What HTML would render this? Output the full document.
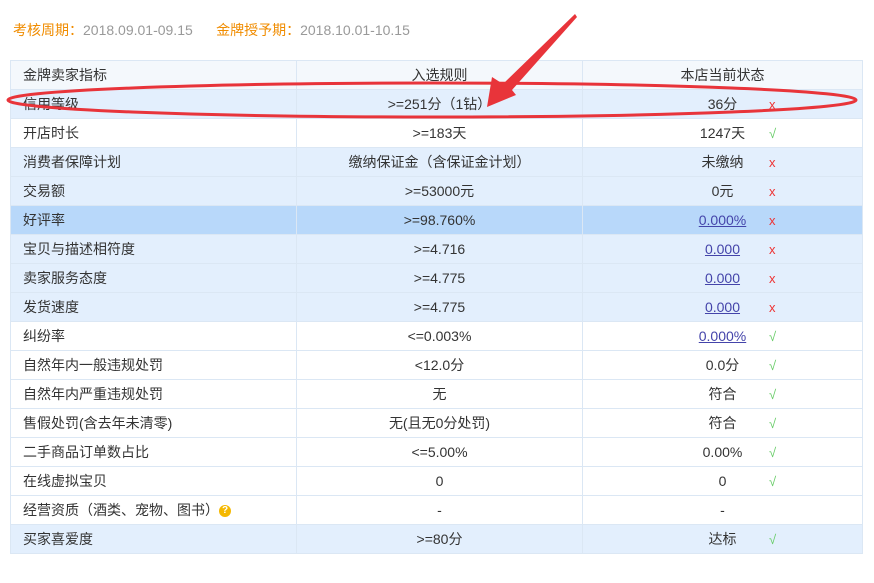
<!DOCTYPE html>
<html><head><meta charset="utf-8"><style>
body{margin:0;background:#fff;width:874px;height:583px;overflow:hidden;position:relative;font-family:"Liberation Sans","Noto Sans CJK SC",sans-serif;font-size:14px;color:#333}
.top{position:absolute;left:13px;top:20px;font-size:14px;color:#999}
.top b{font-weight:normal;color:#f08c00}
table{position:absolute;left:10px;top:60px;width:852px;border-collapse:collapse;table-layout:fixed}
td{height:28px;border:1px solid #dbe7f4;padding:0;text-align:center;line-height:28px;white-space:nowrap}
td:first-child{text-align:left;padding-left:12px}
tr{background:#fff}
tr.b{background:#e3effd}
tr.h{background:#f4f8fc}
tr.s{background:#b8d8fa}
.m{position:absolute;left:769px;font-size:13px}
.x{color:#e33}
.ok{color:#6c6}
u{color:#44a}
.q{display:inline-block;width:12px;height:12px;border-radius:6px;background:#f5b800;color:#fff;font-size:10px;line-height:12px;text-align:center;vertical-align:middle;font-weight:bold}
svg{position:absolute;left:0;top:0}
</style></head><body>
<div class="top"><b>考核周期：</b>2018.09.01-09.15 &nbsp;&nbsp;&nbsp;&nbsp; <b>金牌授予期：</b>2018.10.01-10.15</div>
<table>
<colgroup><col style="width:286px"><col style="width:286px"><col style="width:280px"></colgroup>
<tr class="h"><td>金牌卖家指标</td><td>入选规则</td><td>本店当前状态</td></tr>
<tr class="b"><td>信用等级</td><td>&gt;=251分（1钻）</td><td>36分</td></tr>
<tr><td>开店时长</td><td>&gt;=183天</td><td>1247天</td></tr>
<tr class="b"><td>消费者保障计划</td><td>缴纳保证金（含保证金计划）</td><td>未缴纳</td></tr>
<tr class="b"><td>交易额</td><td>&gt;=53000元</td><td>0元</td></tr>
<tr class="s"><td>好评率</td><td>&gt;=98.760%</td><td><u>0.000%</u></td></tr>
<tr class="b"><td>宝贝与描述相符度</td><td>&gt;=4.716</td><td><u>0.000</u></td></tr>
<tr class="b"><td>卖家服务态度</td><td>&gt;=4.775</td><td><u>0.000</u></td></tr>
<tr class="b"><td>发货速度</td><td>&gt;=4.775</td><td><u>0.000</u></td></tr>
<tr><td>纠纷率</td><td>&lt;=0.003%</td><td><u>0.000%</u></td></tr>
<tr><td>自然年内一般违规处罚</td><td>&lt;12.0分</td><td>0.0分</td></tr>
<tr><td>自然年内严重违规处罚</td><td>无</td><td>符合</td></tr>
<tr><td>售假处罚(含去年未清零)</td><td>无(且无0分处罚)</td><td>符合</td></tr>
<tr><td>二手商品订单数占比</td><td>&lt;=5.00%</td><td>0.00%</td></tr>
<tr><td>在线虚拟宝贝</td><td>0</td><td>0</td></tr>
<tr><td>经营资质（酒类、宠物、图书）<span class="q">?</span></td><td>-</td><td>-</td></tr>
<tr class="b"><td>买家喜爱度</td><td>&gt;=80分</td><td>达标</td></tr>
</table>
<div style="position:absolute;left:0;top:2px;font-size:13px">
<span class="m x" style="top:95px">x</span>
<span class="m ok" style="top:124px">√</span>
<span class="m x" style="top:153px">x</span>
<span class="m x" style="top:182px">x</span>
<span class="m x" style="top:211px">x</span>
<span class="m x" style="top:240px">x</span>
<span class="m x" style="top:269px">x</span>
<span class="m x" style="top:298px">x</span>
<span class="m ok" style="top:327px">√</span>
<span class="m ok" style="top:356px">√</span>
<span class="m ok" style="top:385px">√</span>
<span class="m ok" style="top:414px">√</span>
<span class="m ok" style="top:443px">√</span>
<span class="m ok" style="top:472px">√</span>
<span class="m ok" style="top:530px">√</span>
</div>
<svg width="874" height="583">
<ellipse cx="432" cy="100" rx="424" ry="17" fill="none" stroke="#e8343a" stroke-width="3"/>
<polygon points="575,14 577,17 512,90 516,95 487,107 492,77 503,84" fill="#e8343a"/>
</svg>
</body></html>
